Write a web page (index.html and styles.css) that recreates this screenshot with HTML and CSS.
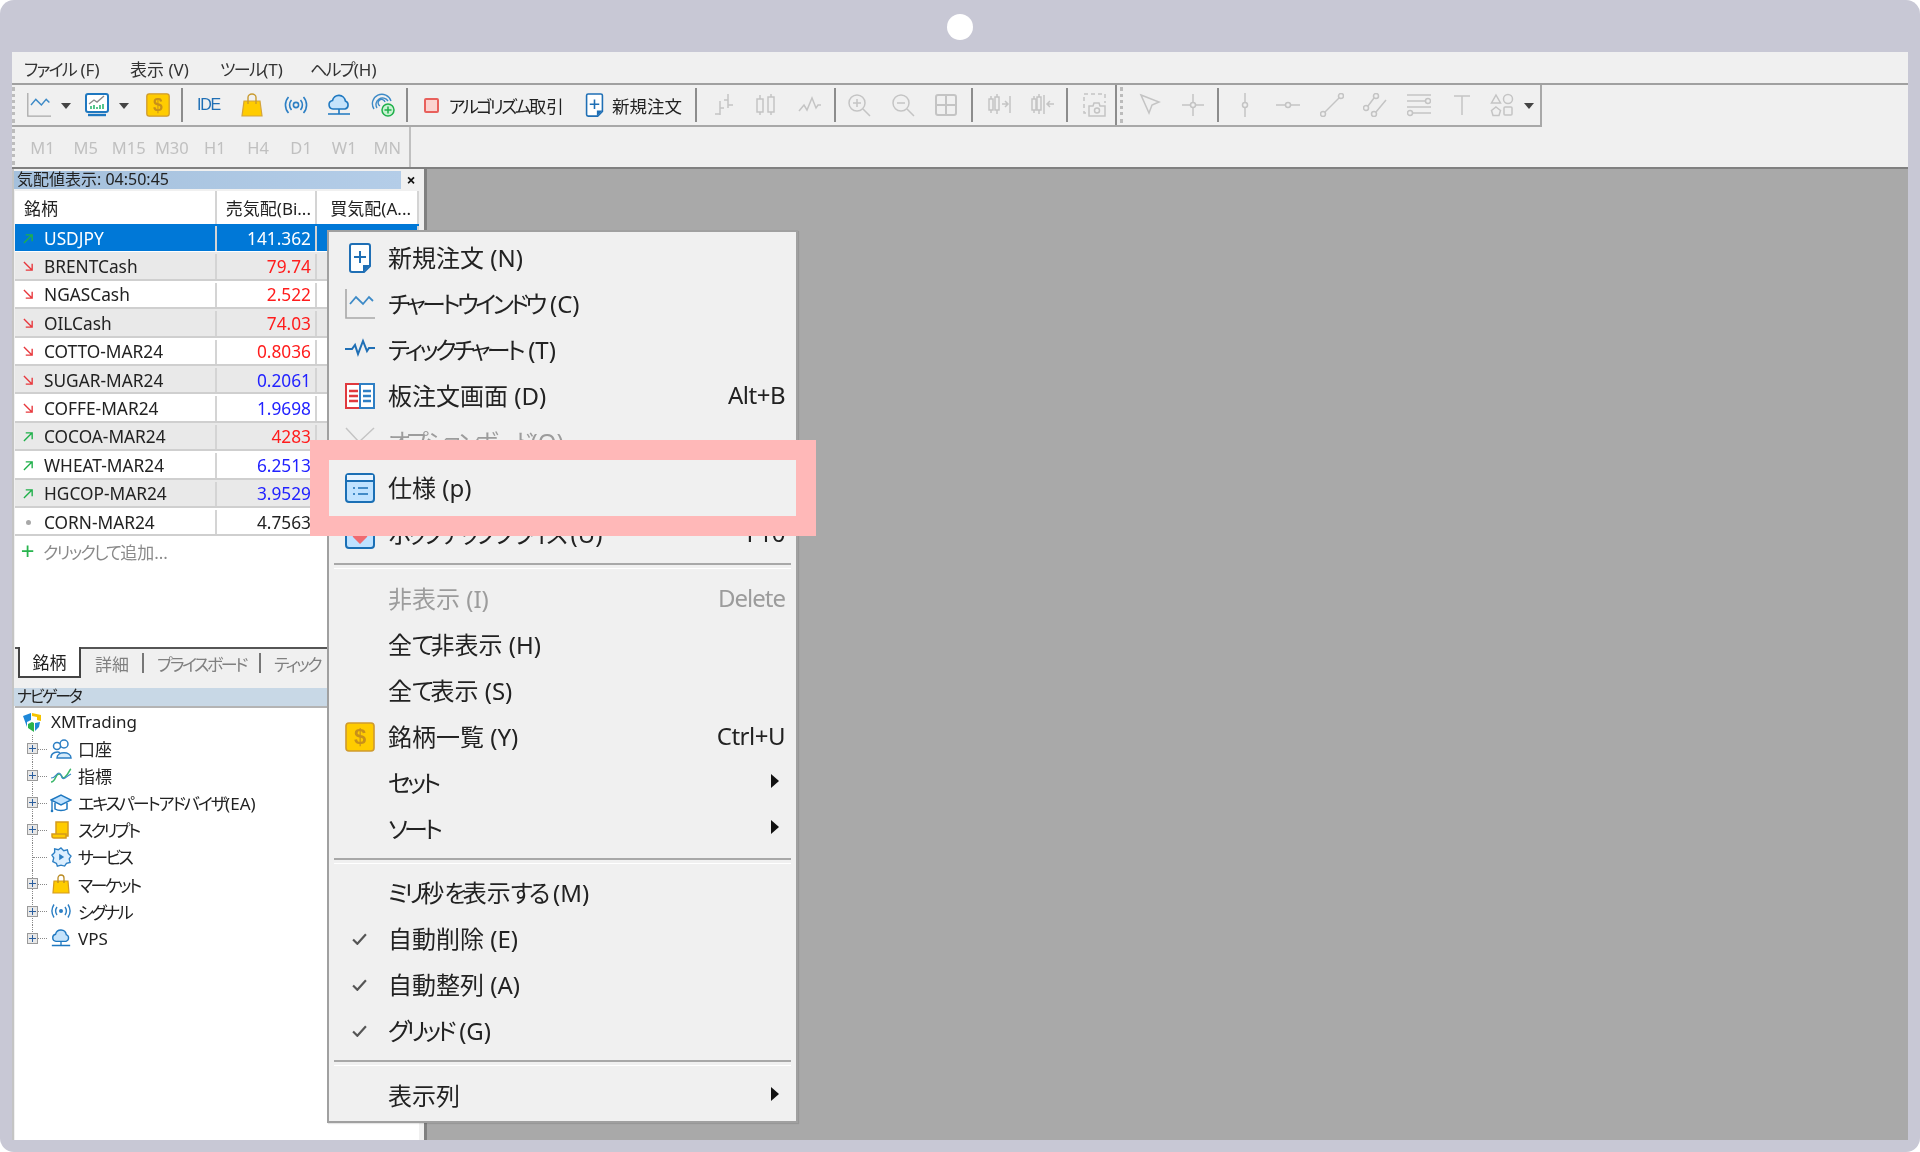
FILE: index.html
```html
<!DOCTYPE html>
<html lang="ja">
<head>
    <meta charset="utf-8" />
    <title>MetaTrader 5</title>
    <link rel="stylesheet" href="styles.css">
</head>
<body>
    <svg class="defs" xmlns="http://www.w3.org/2000/svg">
        <symbol id="i-line" viewBox="0 0 30 30">
            <path d="M1 0v29h29" fill="none" stroke="#a8a8a8" stroke-width="1.6"/>
            <path d="M5 15l6-7 7 7 6-7 4 4" fill="none" stroke="#3d8ac7" stroke-width="1.8"/>
        </symbol>
        <symbol id="i-chartwin" viewBox="0 0 24 24">
            <rect x="1" y="1" width="22" height="18" rx="2" fill="#fff" stroke="#1f78c0" stroke-width="2"/>
            <path d="M4 11l5-4 3 2 7-6" fill="none" stroke="#8a8a8a" stroke-width="1.4"/>
            <path d="M6 16v-3M9 16v-4M12 16v-2M15 16v-4M18 16v-5" stroke="#2eb872" stroke-width="1.6"/>
            <path d="M3 22h18" stroke="#1f78c0" stroke-width="2.4"/>
        </symbol>
        <symbol id="i-dollar" viewBox="0 0 30 30">
            <rect x="1" y="1" width="28" height="28" rx="3" fill="#ffcc00" stroke="#cf9a2e" stroke-width="1.6"/>
            <text x="15" y="22" text-anchor="middle" class="dollar">$</text>
        </symbol>
        <symbol id="i-bag" viewBox="0 0 24 24">
            <path d="M4 8h16l2 15H2z" fill="#ffcc00" stroke="#d4a43c" stroke-width="1.2"/>
            <path d="M8 11V4.500a4 3.500 0 0 1 8 0V11" fill="none" stroke="#c89a30" stroke-width="1.4"/>
        </symbol>
        <symbol id="i-signal" viewBox="0 0 24 24">
            <circle cx="12" cy="12" r="2.600" fill="none" stroke="#2c7fc4" stroke-width="1.600"/>
            <path d="M7.500 7a7.500 7.500 0 0 0 0 10M16.500 7a7.500 7.500 0 0 1 0 10M4.500 4a12 12 0 0 0 0 16M19.500 4a12 12 0 0 1 0 16" fill="none" stroke="#2c7fc4" stroke-width="1.600"/>
        </symbol>
        <symbol id="i-cloud" viewBox="0 0 24 24">
            <path d="M6 16a4.300 4.300 0 0 1-.5-8.500 6.500 6.500 0 0 1 12.800.5A4.200 4.200 0 0 1 18 16z" fill="#c5e3fb" stroke="#1f78c0" stroke-width="1.600"/>
            <path d="M12 16v5M1 21h22" fill="none" stroke="#1f78c0" stroke-width="1.600"/>
        </symbol>
        <symbol id="i-vps" viewBox="0 0 24 24">
            <path d="M3 16A9.500 9.500 0 1 1 20 8M6 15A6.500 6.500 0 1 1 17 8M9 13a3.500 3.500 0 1 1 5-4" fill="none" stroke="#3d8ac7" stroke-width="1.400"/>
            <circle cx="17" cy="17" r="6" fill="#c9f2d2" stroke="#1fb04a" stroke-width="1.500"/>
            <path d="M17 13.500v7M13.500 17h7" stroke="#1fb04a" stroke-width="1.500"/>
        </symbol>
        <symbol id="i-new" viewBox="0 0 24 30">
            <path d="M4 1h16a2 2 0 0 1 2 2v20l-6 6H4a2 2 0 0 1-2-2V3a2 2 0 0 1 2-2z" fill="#fff" stroke="#1f6fb5" stroke-width="2"/>
            <path d="M12 8v12M6 14h12" stroke="#1f6fb5" stroke-width="2"/>
            <path d="M15 29v-7h7z" fill="#1f6fb5"/>
        </symbol>
        <symbol id="i-tick" viewBox="0 0 30 30">
            <path d="M0 14h7l3-4 3 9 5-13 4 10 2-3h6" fill="none" stroke="#1f6fb5" stroke-width="2"/>
        </symbol>
        <symbol id="i-board" viewBox="0 0 30 30">
            <rect x="1" y="3" width="14" height="24" fill="#fff" stroke="#e0393e" stroke-width="2"/>
            <rect x="15" y="3" width="14" height="24" fill="#fff" stroke="#2f7fc4" stroke-width="2"/>
            <path d="M4 10h9M4 15h9M4 20h9" stroke="#e0393e" stroke-width="2.400"/>
            <path d="M18 10h8M18 15h8M18 20h8" stroke="#2f7fc4" stroke-width="2.400"/>
        </symbol>
        <symbol id="i-spec" viewBox="0 0 30 30">
            <rect x="1" y="1" width="28" height="28" rx="3" fill="#bfe2ff" stroke="#1a6fb5" stroke-width="2"/>
            <path d="M1 8h28" stroke="#1a6fb5" stroke-width="2"/>
            <path d="M2 2h26v5H2z" fill="#e6f3ff"/>
            <path d="M8 15h2M13 15h10M8 21h2M13 21h10" stroke="#1a6fb5" stroke-width="1.600"/>
        </symbol>
        <symbol id="i-popup" viewBox="0 0 30 30">
            <rect x="1" y="1" width="28" height="28" rx="3" fill="#bfe2ff" stroke="#1a6fb5" stroke-width="2"/>
            <path d="M15 25l-7-7a4 4 0 0 1 7-4 4 4 0 0 1 7 4z" fill="#f06a70"/>
        </symbol>
    </svg>

    <div class="frame">
        <div class="notch"></div>
        <div class="window">
            <div class="menubar">
                <span class="menubar-item m1"><span class="k">ファイル</span> (F)</span>
                <span class="menubar-item m2">表示 (V)</span>
                <span class="menubar-item m3"><span class="k">ツール</span>(T)</span>
                <span class="menubar-item m4"><span class="k">ヘルプ</span>(H)</span>
            </div>

            <div class="toolbar-row">
                <div class="toolbar">
                    <span class="gripper first"></span>
                    <button class="tb"><svg class="ico24"><use href="#i-line"/></svg></button>
                    <span class="tb-arrow"></span>
                    <button class="tb g5"><svg class="ico24"><use href="#i-chartwin"/></svg></button>
                    <span class="tb-arrow"></span>
                    <button class="tb g7"><svg class="ico24"><use href="#i-dollar"/></svg></button>
                    <span class="sep g1"></span>
                    <button class="tb g4 ide">IDE</button>
                    <button class="tb"><svg class="ico24"><use href="#i-bag"/></svg></button>
                    <button class="tb"><svg class="ico24"><use href="#i-signal"/></svg></button>
                    <button class="tb"><svg class="ico24"><use href="#i-cloud"/></svg></button>
                    <button class="tb"><svg class="ico24"><use href="#i-vps"/></svg></button>
                    <span class="sep g1"></span>
                    <button class="tb-text algo">
                        <span class="red-square"></span>
                        <span><span class="k">アルゴリズム</span>取引</span>
                    </button>
                    <button class="tb-text order">
                        <svg class="ico-order"><use href="#i-new"/></svg>
                        <span>新規注文</span>
                    </button>
                    <span class="sep"></span>
                    <button class="tb g4"><svg class="ico24" viewBox="0 0 24 24"><path class="off" d="M9 8v14M4 21h5M9 15h4M17 1v14M13 7h4M17 12h5"/></svg></button>
                    <button class="tb"><svg class="ico24" viewBox="0 0 24 24"><rect class="off" x="3" y="6" width="6" height="13"/><rect class="off" x="14" y="4" width="6" height="15"/><path class="off" d="M6 2v4M6 19v3M17 1v3M17 19v3"/></svg></button>
                    <button class="tb"><svg class="ico24" viewBox="0 0 24 24"><path class="off" d="M1 18l5-6 3 5 5-12 4 10 2-3h3"/></svg></button>
                    <span class="sep g2"></span>
                    <button class="tb g2"><svg class="ico24" viewBox="0 0 24 24"><circle class="off" cx="10" cy="10" r="8"/><path class="off" d="M16 16l7 7M10 6v8M6 10h8"/></svg></button>
                    <button class="tb"><svg class="ico24" viewBox="0 0 24 24"><circle class="off" cx="10" cy="10" r="8"/><path class="off" d="M16 16l7 7M6 10h8"/></svg></button>
                    <button class="tb"><svg class="ico24" viewBox="0 0 24 24"><rect class="off thick" x="2" y="2" width="20" height="20" rx="2"/><path class="off thick" d="M12 2v20M2 12h20"/></svg></button>
                    <span class="sep g3"></span>
                    <button class="tb g4"><svg class="ico24" viewBox="0 0 24 24"><rect class="off" x="2" y="6" width="4" height="11"/><rect class="off" x="8" y="4" width="4" height="13"/><path class="off" d="M4 3v3M4 17v3M10 1v3M10 17v4M15 11h6M18 8l3 3-3 3M23 3v17"/></svg></button>
                    <button class="tb"><svg class="ico24" viewBox="0 0 24 24"><rect class="off" x="1" y="6" width="4" height="11"/><rect class="off" x="6" y="4" width="4" height="13"/><path class="off" d="M3 3v3M3 17v3M8 1v3M8 17v4M13 2v19M16 11h7M19 8l-3 3 3 3"/></svg></button>
                    <span class="sep g2"></span>
                    <button class="tb g4"><svg class="ico24" viewBox="0 0 24 24"><path class="off dash" d="M4 20H2V1h21v9"/><path class="off" d="M7 23V13h4l1-3h5l1 3h5v10z"/><circle class="off" cx="15" cy="17.500" r="2.500"/></svg></button>
                    <span class="sep sep-end"></span>
                    <span class="gripper g3"></span>
                    <button class="tb g5"><svg class="ico24" viewBox="0 0 24 24"><path class="off" d="M3 2l18 7-7 3-3 8z"/></svg></button>
                    <button class="tb"><svg class="ico24" viewBox="0 0 24 24"><circle class="off" cx="12" cy="12" r="2.500"/><path class="off" d="M12 1v8.500M12 14.500V23M1 12h8.500M14.500 12H23"/></svg></button>
                    <span class="sep g2"></span>
                    <button class="tb g4"><svg class="ico24" viewBox="0 0 24 24"><circle class="off" cx="12" cy="12" r="2.500"/><path class="off" d="M12 0v9.500M12 14.500V24"/></svg></button>
                    <button class="tb"><svg class="ico24" viewBox="0 0 24 24"><circle class="off" cx="12" cy="12" r="2.500"/><path class="off" d="M0 12h9.500M14.500 12H24"/></svg></button>
                    <button class="tb"><svg class="ico24" viewBox="0 0 24 24"><circle class="off" cx="3" cy="21" r="2.500"/><circle class="off" cx="21" cy="3" r="2.500"/><path class="off" d="M5 19L19 5"/></svg></button>
                    <button class="tb"><svg class="ico24" viewBox="0 0 24 24"><circle class="off" cx="3" cy="15" r="2.500"/><circle class="off" cx="13" cy="3" r="2.500"/><circle class="off" cx="11" cy="21" r="2.500"/><path class="off" d="M5 13l6-8M13 19l10-12"/></svg></button>
                    <button class="tb"><svg class="ico24" viewBox="0 0 24 24"><circle class="off" cx="21" cy="8" r="2.500"/><circle class="off" cx="3" cy="20" r="2.500"/><path class="off" d="M0 2h24M0 8h18.500M0 14h24M5.500 20H24"/></svg></button>
                    <button class="tb"><svg class="ico24" viewBox="0 0 24 24"><path class="off" d="M4 3h16M12 3v19"/></svg></button>
                    <button class="tb pull"><svg class="ico24" viewBox="0 0 24 24"><path class="off" d="M6 2l4.500 8h-9z"/><circle class="off" cx="18" cy="6" r="4.500"/><path class="off" d="M6 14l4.500 3.500-1.500 5H3l-1.500-5z"/><rect class="off" x="14" y="14" width="8" height="8" rx="1"/></svg></button>
                    <span class="tb-arrow"></span>
                </div>
            </div>

            <div class="tfbar">
                <span class="gripper"></span>
                <span class="tf">M1</span>
                <span class="tf">M5</span>
                <span class="tf">M15</span>
                <span class="tf">M30</span>
                <span class="tf">H1</span>
                <span class="tf">H4</span>
                <span class="tf">D1</span>
                <span class="tf">W1</span>
                <span class="tf">MN</span>
                <span class="tf-end"></span>
            </div>

            <div class="main">
                <div class="side">
                    <div class="panel-title watch-title">
                        <span class="panel-title-text">気配値表示: 04:50:45</span>
                        <span class="panel-close">×</span>
                    </div>
                    <div class="watch">
                        <div class="row head">
                            <div class="cell name">銘柄</div>
                            <div class="cell price">売気配(Bi...</div>
                            <div class="cell ask">買気配(A...</div>
                        </div>
                        <div class="row selected">
                            <div class="cell name"><svg class="arrow up" viewBox="0 0 12 12"><path d="M1 11L10 2M3 2h7v7"/></svg>USDJPY</div>
                            <div class="cell price">141.362</div>
                            <div class="cell ask"></div>
                        </div>
                        <div class="row alt">
                            <div class="cell name"><svg class="arrow down" viewBox="0 0 12 12"><path d="M1 1l9 9M3 10h7V3"/></svg>BRENTCash</div>
                            <div class="cell price red">79.74</div>
                            <div class="cell ask"></div>
                        </div>
                        <div class="row">
                            <div class="cell name"><svg class="arrow down" viewBox="0 0 12 12"><path d="M1 1l9 9M3 10h7V3"/></svg>NGASCash</div>
                            <div class="cell price red">2.522</div>
                            <div class="cell ask"></div>
                        </div>
                        <div class="row alt">
                            <div class="cell name"><svg class="arrow down" viewBox="0 0 12 12"><path d="M1 1l9 9M3 10h7V3"/></svg>OILCash</div>
                            <div class="cell price red">74.03</div>
                            <div class="cell ask"></div>
                        </div>
                        <div class="row">
                            <div class="cell name"><svg class="arrow down" viewBox="0 0 12 12"><path d="M1 1l9 9M3 10h7V3"/></svg>COTTO-MAR24</div>
                            <div class="cell price red">0.8036</div>
                            <div class="cell ask"></div>
                        </div>
                        <div class="row alt">
                            <div class="cell name"><svg class="arrow down" viewBox="0 0 12 12"><path d="M1 1l9 9M3 10h7V3"/></svg>SUGAR-MAR24</div>
                            <div class="cell price blue">0.2061</div>
                            <div class="cell ask"></div>
                        </div>
                        <div class="row">
                            <div class="cell name"><svg class="arrow down" viewBox="0 0 12 12"><path d="M1 1l9 9M3 10h7V3"/></svg>COFFE-MAR24</div>
                            <div class="cell price blue">1.9698</div>
                            <div class="cell ask"></div>
                        </div>
                        <div class="row alt">
                            <div class="cell name"><svg class="arrow up" viewBox="0 0 12 12"><path d="M1 11L10 2M3 2h7v7"/></svg>COCOA-MAR24</div>
                            <div class="cell price red">4283</div>
                            <div class="cell ask"></div>
                        </div>
                        <div class="row">
                            <div class="cell name"><svg class="arrow up" viewBox="0 0 12 12"><path d="M1 11L10 2M3 2h7v7"/></svg>WHEAT-MAR24</div>
                            <div class="cell price blue">6.2513</div>
                            <div class="cell ask"></div>
                        </div>
                        <div class="row alt">
                            <div class="cell name"><svg class="arrow up" viewBox="0 0 12 12"><path d="M1 11L10 2M3 2h7v7"/></svg>HGCOP-MAR24</div>
                            <div class="cell price blue">3.9529</div>
                            <div class="cell ask"></div>
                        </div>
                        <div class="row">
                            <div class="cell name"><span class="dot"></span>CORN-MAR24</div>
                            <div class="cell price">4.7563</div>
                            <div class="cell ask"></div>
                        </div>
                        <div class="add-row"><span class="add-plus">+</span><span><span class="k">クリックして</span>追加...</span></div>
                    </div>
                    <div class="tabs">
                        <span class="tab active">銘柄</span>
                        <span class="tab first">詳細</span>
                        <span class="tab-sep"></span>
                        <span class="tab"><span class="k">プライスボード</span></span>
                        <span class="tab-sep"></span>
                        <span class="tab"><span class="k">ティック</span></span>
                    </div>
                    <div class="panel-title nav-title"><span class="panel-title-text"><span class="k">ナビゲータ</span></span></div>
                    <div class="tree">
                        <div class="tree-root">
                            <svg class="logo" viewBox="0 0 20 20">
                                <path d="M1 4l8-3v7l-4 2v5z" fill="#1e88d8"/>
                                <path d="M10 1l9 2v6l-4-1V5l-5-1z" fill="#f5c400"/>
                                <path d="M6 12l4-2 2 1v9l-6-4z" fill="#2bb24c"/>
                                <path d="M13 11l5-1-1 5-4 4z" fill="#1e88d8"/>
                            </svg>
                            <span>XMTrading</span>
                        </div>
                        <div class="tree-row"><span class="plus"></span>
                            <svg class="tree-ico" viewBox="0 0 22 20"><circle cx="14" cy="5" r="4" fill="#fff" stroke="#2c7fc4" stroke-width="1.500"/><path d="M7 19c0-7 14-7 14 0z" fill="#d5ebfb" stroke="#2c7fc4" stroke-width="1.500"/><circle cx="7" cy="7" r="3.500" fill="#fff" stroke="#2c7fc4" stroke-width="1.500"/><path d="M1 19c0-6 7-7 9-5" fill="none" stroke="#2c7fc4" stroke-width="1.500"/></svg>
                            <span>口座</span></div>
                        <div class="tree-row"><span class="plus"></span>
                            <svg class="tree-ico" viewBox="0 0 22 20"><path d="M1 16c5 0 4-8 8-8s2 6 6 3 4-7 6-8" fill="none" stroke="#3bb86a" stroke-width="1.500"/><path d="M1 12c5 0 5-5 8-5s2 8 6 5 4-3 6-4" fill="none" stroke="#3d8ac7" stroke-width="1.200"/></svg>
                            <span>指標</span></div>
                        <div class="tree-row"><span class="plus"></span>
                            <svg class="tree-ico" viewBox="0 0 22 20"><path d="M1 7l10-5 10 5-10 5z" fill="#bfe2ff" stroke="#1f78c0" stroke-width="1.400"/><path d="M5 10v6c3 2 9 2 12 0v-6" fill="none" stroke="#1f78c0" stroke-width="1.500"/><path d="M2 8v9" stroke="#1f78c0" stroke-width="1.400"/><circle cx="2" cy="18" r="1.300" fill="#1f78c0"/></svg>
                            <span><span class="k ea">エキスパートアドバイザ</span>(EA)</span></div>
                        <div class="tree-row"><span class="plus"></span>
                            <svg class="tree-ico" viewBox="0 0 22 20"><path d="M6 2h12v14H6z" fill="#ffcc00" stroke="#d49a1e" stroke-width="1.500"/><path d="M2 14h14v4H4a2 2 0 0 1-2-2z" fill="#ffcc00" stroke="#d49a1e" stroke-width="1.500"/></svg>
                            <span><span class="k">スクリプト</span></span></div>
                        <div class="tree-row leaf">
                            <svg class="tree-ico" viewBox="0 0 22 22"><path d="M11 1l3 3 4-1 1 4 3 3-2 3 1 4-4 1-2 3-4-1-4 1-1-3-4-2 1-4-2-3 3-3 0-4 4 1z" fill="#dcefff" stroke="#2c7fc4" stroke-width="1.500"/><path d="M9 7.500v7l5.500-3.500z" fill="#2c7fc4"/></svg>
                            <span><span class="k">サービス</span></span></div>
                        <div class="tree-row"><span class="plus"></span>
                            <svg class="tree-ico" viewBox="0 0 22 20"><path d="M4 7h14l1 12H3z" fill="#ffcc00" stroke="#d49a1e" stroke-width="1.200"/><path d="M8 9V4a3 3 0 0 1 6 0v5" fill="none" stroke="#b98a22" stroke-width="1.300"/></svg>
                            <span><span class="k">マーケット</span></span></div>
                        <div class="tree-row"><span class="plus"></span>
                            <svg class="tree-ico" viewBox="0 0 22 20"><circle cx="11" cy="10" r="2" fill="#2c7fc4"/><path d="M7 6a7 7 0 0 0 0 8M15 6a7 7 0 0 1 0 8M4 3.500a12 12 0 0 0 0 13M18 3.500a12 12 0 0 1 0 13" fill="none" stroke="#2c7fc4" stroke-width="1.400"/></svg>
                            <span><span class="k">シグナル</span></span></div>
                        <div class="tree-row last"><span class="plus"></span>
                            <svg class="tree-ico" viewBox="0 0 24 24"><use href="#i-cloud"/></svg>
                            <span>VPS</span></div>
                    </div>
                </div>
                <div class="workspace"></div>

                <div class="context-menu">
                    <div class="item"><span class="item-ico"><svg class="ico-order big"><use href="#i-new"/></svg></span><span class="item-label">新規注文 (N)</span></div>
                    <div class="item"><span class="item-ico"><svg class="ico30"><use href="#i-line"/></svg></span><span class="item-label"><span class="k">チャートウインドウ</span> (C)</span></div>
                    <div class="item"><span class="item-ico"><svg class="ico30"><use href="#i-tick"/></svg></span><span class="item-label"><span class="k">ティックチャート</span> (T)</span></div>
                    <div class="item"><span class="item-ico"><svg class="ico30"><use href="#i-board"/></svg></span><span class="item-label">板注文画面 (D)</span><span class="item-key">Alt+B</span></div>
                    <div class="item disabled"><span class="item-ico"><svg class="ico30" viewBox="0 0 30 30"><path class="off" d="M1 1l13 14L29 1"/></svg></span><span class="item-label"><span class="k">オプションボード</span>(O)</span></div>
                    <div class="item"><span class="item-ico"><svg class="ico30"><use href="#i-spec"/></svg></span><span class="item-label">仕様 (p)</span></div>
                    <div class="item"><span class="item-ico"><svg class="ico30"><use href="#i-popup"/></svg></span><span class="item-label"><span class="k">ポップアッププライス</span> (U)</span><span class="item-key">F10</span></div>
                    <div class="menu-sep"></div>
                    <div class="item disabled"><span class="item-ico"></span><span class="item-label">非表示 (I)</span><span class="item-key">Delete</span></div>
                    <div class="item"><span class="item-ico"></span><span class="item-label">全<span class="k">て</span>非表示 (H)</span></div>
                    <div class="item"><span class="item-ico"></span><span class="item-label">全<span class="k">て</span>表示 (S)</span></div>
                    <div class="item"><span class="item-ico"><svg class="ico30"><use href="#i-dollar"/></svg></span><span class="item-label">銘柄一覧 (Y)</span><span class="item-key">Ctrl+U</span></div>
                    <div class="item"><span class="item-ico"></span><span class="item-label"><span class="k">セット</span></span><span class="sub"></span></div>
                    <div class="item"><span class="item-ico"></span><span class="item-label"><span class="k">ソート</span></span><span class="sub"></span></div>
                    <div class="menu-sep"></div>
                    <div class="item"><span class="item-ico"></span><span class="item-label"><span class="k">ミリ</span>秒<span class="k">を</span>表示<span class="k">する</span> (M)</span></div>
                    <div class="item"><span class="item-ico"><svg class="check" viewBox="0 0 14 11"><path d="M1 6l4 4 8-9"/></svg></span><span class="item-label">自動削除 (E)</span></div>
                    <div class="item"><span class="item-ico"><svg class="check" viewBox="0 0 14 11"><path d="M1 6l4 4 8-9"/></svg></span><span class="item-label">自動整列 (A)</span></div>
                    <div class="item"><span class="item-ico"><svg class="check" viewBox="0 0 14 11"><path d="M1 6l4 4 8-9"/></svg></span><span class="item-label"><span class="k">グリッド</span> (G)</span></div>
                    <div class="menu-sep"></div>
                    <div class="item"><span class="item-ico"></span><span class="item-label">表示列</span><span class="sub"></span></div>
                </div>

                <div class="highlight"></div>
            </div>
        </div>
    </div>
</body>
</html>
```

FILE: styles.css
```css
* {
    margin: 0;
    padding: 0;
    box-sizing: border-box;
}

body {
    background: #fff;
    font-family: "Noto Sans", "Noto Sans CJK JP", sans-serif;
    font-feature-settings: "palt";
    font-size: 17px;
    color: #222;
}

.defs {
    display: none;
}

.dollar {
    font-family: "Liberation Sans", sans-serif;
    font-size: 22px;
    font-weight: 700;
    fill: #c8901a;
}

.k {
    letter-spacing: -0.15em;
}

.frame {
    width: 1920px;
    height: 1152px;
    background: #c8c8d5;
    border-radius: 14px;
    padding: 0 12px 12px;
    display: flex;
    flex-direction: column;
    overflow: hidden;
}

.notch {
    width: 26px;
    height: 26px;
    border-radius: 50%;
    background: #fff;
    margin: 14px auto 12px;
    flex: none;
}

.window {
    flex: 1;
    display: flex;
    flex-direction: column;
    background: #f0f0f0;
    min-height: 0;
    filter: blur(0.35px);
}

/* menu bar */
.menubar {
    height: 33px;
    flex: none;
    display: flex;
    align-items: center;
    border-bottom: 2px solid #a0a0a0;
    padding-top: 2px;
    color: #333;
}

.menubar .k {
    letter-spacing: -0.1em;
}

.menubar-item {
    white-space: nowrap;
}

.m1 { margin-left: 12px; width: 106px; }
.m2 { width: 90px; }
.m3 { width: 90px; }

/* toolbars */
.toolbar-row {
    height: 42px;
    flex: none;
}

.toolbar {
    width: 1530px;
    height: 42px;
    display: flex;
    align-items: center;
    border-bottom: 2px solid #a8a8a8;
    border-right: 2px solid #a8a8a8;
}

.gripper {
    width: 3px;
    height: 36px;
    border-left: 3px dotted #bcbcbc;
    flex: none;
}

.gripper.first {
    margin-right: 2px;
}

.tb {
    width: 43.500px;
    height: 36px;
    background: none;
    border: none;
    display: flex;
    align-items: center;
    justify-content: center;
    flex: none;
}

.g1 { margin-left: 1.250px; }
.g2 { margin-left: 2px; }
.g3 { margin-left: 3px; }
.g4 { margin-left: 4.250px; }
.g5 { margin-left: 4.750px; }
.g7 { margin-left: 7px; }
.pull { margin-left: -4px; }

.ico24 {
    width: 24px;
    height: 24px;
}

.ico30 {
    width: 30px;
    height: 30px;
}

.off {
    fill: none;
    stroke: #c4c4c4;
    stroke-width: 1.500;
}

.off.thick {
    stroke-width: 2;
}

.off.dash {
    stroke-dasharray: 4 3;
}

.ide {
    font-family: "Liberation Sans", sans-serif;
    font-size: 16px;
    color: #1f6fb5;
    letter-spacing: -1.200px;
}

.tb-arrow {
    width: 10px;
    height: 36px;
    position: relative;
    flex: none;
}

.tb-arrow::after {
    content: "";
    position: absolute;
    left: 0;
    top: 16px;
    border: 5px solid transparent;
    border-top: 6px solid #444;
    border-bottom: 0;
}

.sep {
    width: 2px;
    height: 34px;
    background: #8c8c8c;
    flex: none;
}

.sep-end {
    height: 40px;
    margin-left: -1px;
}

.tb-text {
    height: 36px;
    background: none;
    border: none;
    display: flex;
    align-items: center;
    font-family: inherit;
    font-feature-settings: inherit;
    font-size: 17.500px;
    color: #222;
    white-space: nowrap;
    flex: none;
}

.algo {
    width: 177px;
    padding-left: 16px;
    gap: 10.500px;
}

.order {
    width: 110.350px;
    gap: 8.500px;
}

.red-square {
    width: 15px;
    height: 15px;
    background: #fbd3d0;
    border: 2px solid #e8605c;
    border-radius: 2px;
}

.ico-order {
    width: 19px;
    height: 24px;
}

.ico-order.big {
    width: 24px;
    height: 30px;
}

.tfbar {
    height: 42px;
    flex: none;
    display: flex;
    align-items: center;
    border-bottom: 2px solid #808080;
    color: #c0c0c0;
    font-size: 16.500px;
}

.tf {
    width: 43.100px;
    text-align: center;
    flex: none;
}

.tfbar .gripper {
    margin-right: 6px;
}

.tf-end {
    width: 2px;
    height: 40px;
    background: #c0c0c0;
}

/* workspace */
.main {
    flex: 1;
    display: flex;
    position: relative;
    min-height: 0;
}

.workspace {
    flex: 1;
    background: #a9a9a9;
}

.side {
    width: 415px;
    flex: none;
    display: flex;
    flex-direction: column;
    padding: 2px 5px 0 3px;
    border-right: 3px solid #808080;
    box-shadow: inset 2px 0 0 #c4c4c4;
}

.panel-title {
    height: 18px;
    display: flex;
    align-items: center;
    flex: none;
    line-height: 16px;
    font-size: 16px;
    margin-left: -1px;
}

.panel-title-text {
    padding-left: 3px;
    padding-bottom: 2px;
    flex: 1;
}

.watch-title {
    margin-right: -2px;
}

.watch-title .panel-title-text {
    background: linear-gradient(90deg, #a4c0dc, #b4cde8);
    height: 18px;
}

.panel-close {
    width: 20px;
    text-align: center;
    font-weight: 700;
    font-size: 16px;
    color: #111;
}

.nav-title {
    background: #c8d8e6;
    margin-top: 11px;
}

/* market watch table */
.watch {
    margin-top: 2px;
    height: 456px;
    background: #fff;
    flex: none;
}

.row {
    height: 28.400px;
    display: flex;
    border-bottom: 2px solid #cfcfcf;
    padding-top: 2px;
    white-space: nowrap;
    font-size: 17.300px;
}

.row.head {
    height: 33px;
    border-bottom: 0;
    padding-top: 0;
    background: #fff;
    font-size: 17px;
}

.row.alt {
    background: #e9e9e9;
}

.row.selected {
    background: #0078d7;
    color: #fff;
    border-bottom: 1px solid #fff;
}

.cell {
    display: flex;
    align-items: center;
    border-right: 2px solid #d4d4d4;
    overflow: hidden;
}

.name {
    width: 202px;
    padding-left: 8px;
    gap: 10px;
}

.head .name {
    padding-left: 9px;
}

.price {
    width: 100px;
    justify-content: flex-end;
    padding-right: 4px;
}

.ask {
    width: 102px;
    justify-content: flex-end;
    padding-right: 6px;
}

.red { color: #ff1c1c; }
.blue { color: #2222ff; }

.arrow {
    width: 11px;
    height: 11px;
    fill: none;
    stroke-width: 1.500;
    flex: none;
}

.arrow.up { stroke: #1fb04a; }
.arrow.down { stroke: #e8383d; }

.dot {
    width: 5px;
    height: 5px;
    border-radius: 50%;
    background: #a8a8a8;
    margin: 0 3px;
}

.add-row {
    height: 30px;
    display: flex;
    align-items: center;
    gap: 8px;
    padding-left: 5px;
    color: #8a8a8a;
}

.add-row .k {
    letter-spacing: -0.1em;
}

.add-plus {
    width: 15px;
    color: #28b44e;
    font-size: 24px;
    line-height: 24px;
    text-align: center;
}

/* tabs */
.tabs {
    height: 30px;
    flex: none;
    display: flex;
    align-items: center;
    border-top: 2px solid #555;
    color: #808080;
}

.tab {
    white-space: nowrap;
}

.tab.active {
    width: 63px;
    height: 31px;
    margin: -2px 0 -1px 3px;
    background: #fff;
    border: 2px solid #444;
    border-top: 0;
    color: #222;
    text-align: center;
    line-height: 31px;
}

.tab.first {
    margin-left: 14px;
}

.tab-sep {
    width: 2px;
    height: 20px;
    background: #777;
    margin: 0 13px;
}

/* navigator tree */
.tree {
    flex: 1;
    background: #fff;
    border-top: 2px solid #b4b4b4;
}

.tree-root {
    height: 27px;
    display: flex;
    align-items: center;
    padding-left: 7px;
    gap: 9px;
}

.logo {
    width: 20px;
    height: 20px;
}

.tree-row {
    height: 27.100px;
    display: flex;
    align-items: center;
    position: relative;
    padding-left: 35px;
    gap: 6px;
}

.tree-row .ea {
    letter-spacing: -0.12em;
}

.tree-row::before {
    content: "";
    position: absolute;
    left: 17px;
    top: 0;
    height: 100%;
    border-left: 1px dotted #888;
}

.tree-row.last::before {
    height: 50%;
}

.tree-row::after {
    content: "";
    position: absolute;
    left: 18px;
    top: 50%;
    width: 14px;
    border-top: 1px dotted #888;
}

.plus {
    position: absolute;
    left: 12px;
    top: 8px;
    width: 11px;
    height: 11px;
    background: linear-gradient(#2c5f9e, #2c5f9e) center / 7px 1px no-repeat,
                linear-gradient(#2c5f9e, #2c5f9e) center / 1px 7px no-repeat,
                #e8e8e8;
    border: 1px solid #9a9a9a;
    z-index: 1;
}

.tree-ico {
    width: 22px;
    height: 20px;
    flex: none;
}

/* context menu */
.context-menu {
    position: absolute;
    left: 315px;
    top: 61px;
    width: 471px;
    height: 893px;
    background: #f0f0f0;
    border: 2px solid #a0a0a0;
    padding: 3px 0 2px;
    font-size: 24px;
    color: #222;
    box-shadow: 1px 1px 1px rgba(0, 0, 0, 0.1);
}

.item {
    height: 46px;
    display: flex;
    align-items: center;
    padding-right: 11px;
    white-space: nowrap;
}

.item-ico {
    width: 59px;
    padding-left: 2px;
    display: flex;
    justify-content: center;
    flex: none;
}

.item-label {
    flex: 1;
    padding-bottom: 3px;
}

.item-key {
    letter-spacing: -0.500px;
    padding-bottom: 3px;
}

.disabled {
    color: #9c9c9c;
}

.disabled .item-key {
    letter-spacing: -1px;
}

.check {
    width: 15px;
    height: 12px;
    fill: none;
    stroke: #555;
    stroke-width: 2;
}

.sub {
    width: 0;
    height: 0;
    border-left: 8px solid #111;
    border-top: 7px solid transparent;
    border-bottom: 7px solid transparent;
    margin-right: 6px;
    margin-bottom: 4px;
}

.menu-sep {
    height: 18.500px;
    position: relative;
}

.menu-sep::after {
    content: "";
    position: absolute;
    left: 5px;
    right: 5px;
    top: 6px;
    height: 3px;
    border-top: 2px solid #a8a8a8;
    border-bottom: 1px solid #fff;
}

/* pink marker around the spec row */
.highlight {
    position: absolute;
    left: 298px;
    top: 271px;
    width: 506px;
    height: 96px;
    border: solid #ffb8b8;
    border-width: 20px 20px 20px 19px;
}
```
